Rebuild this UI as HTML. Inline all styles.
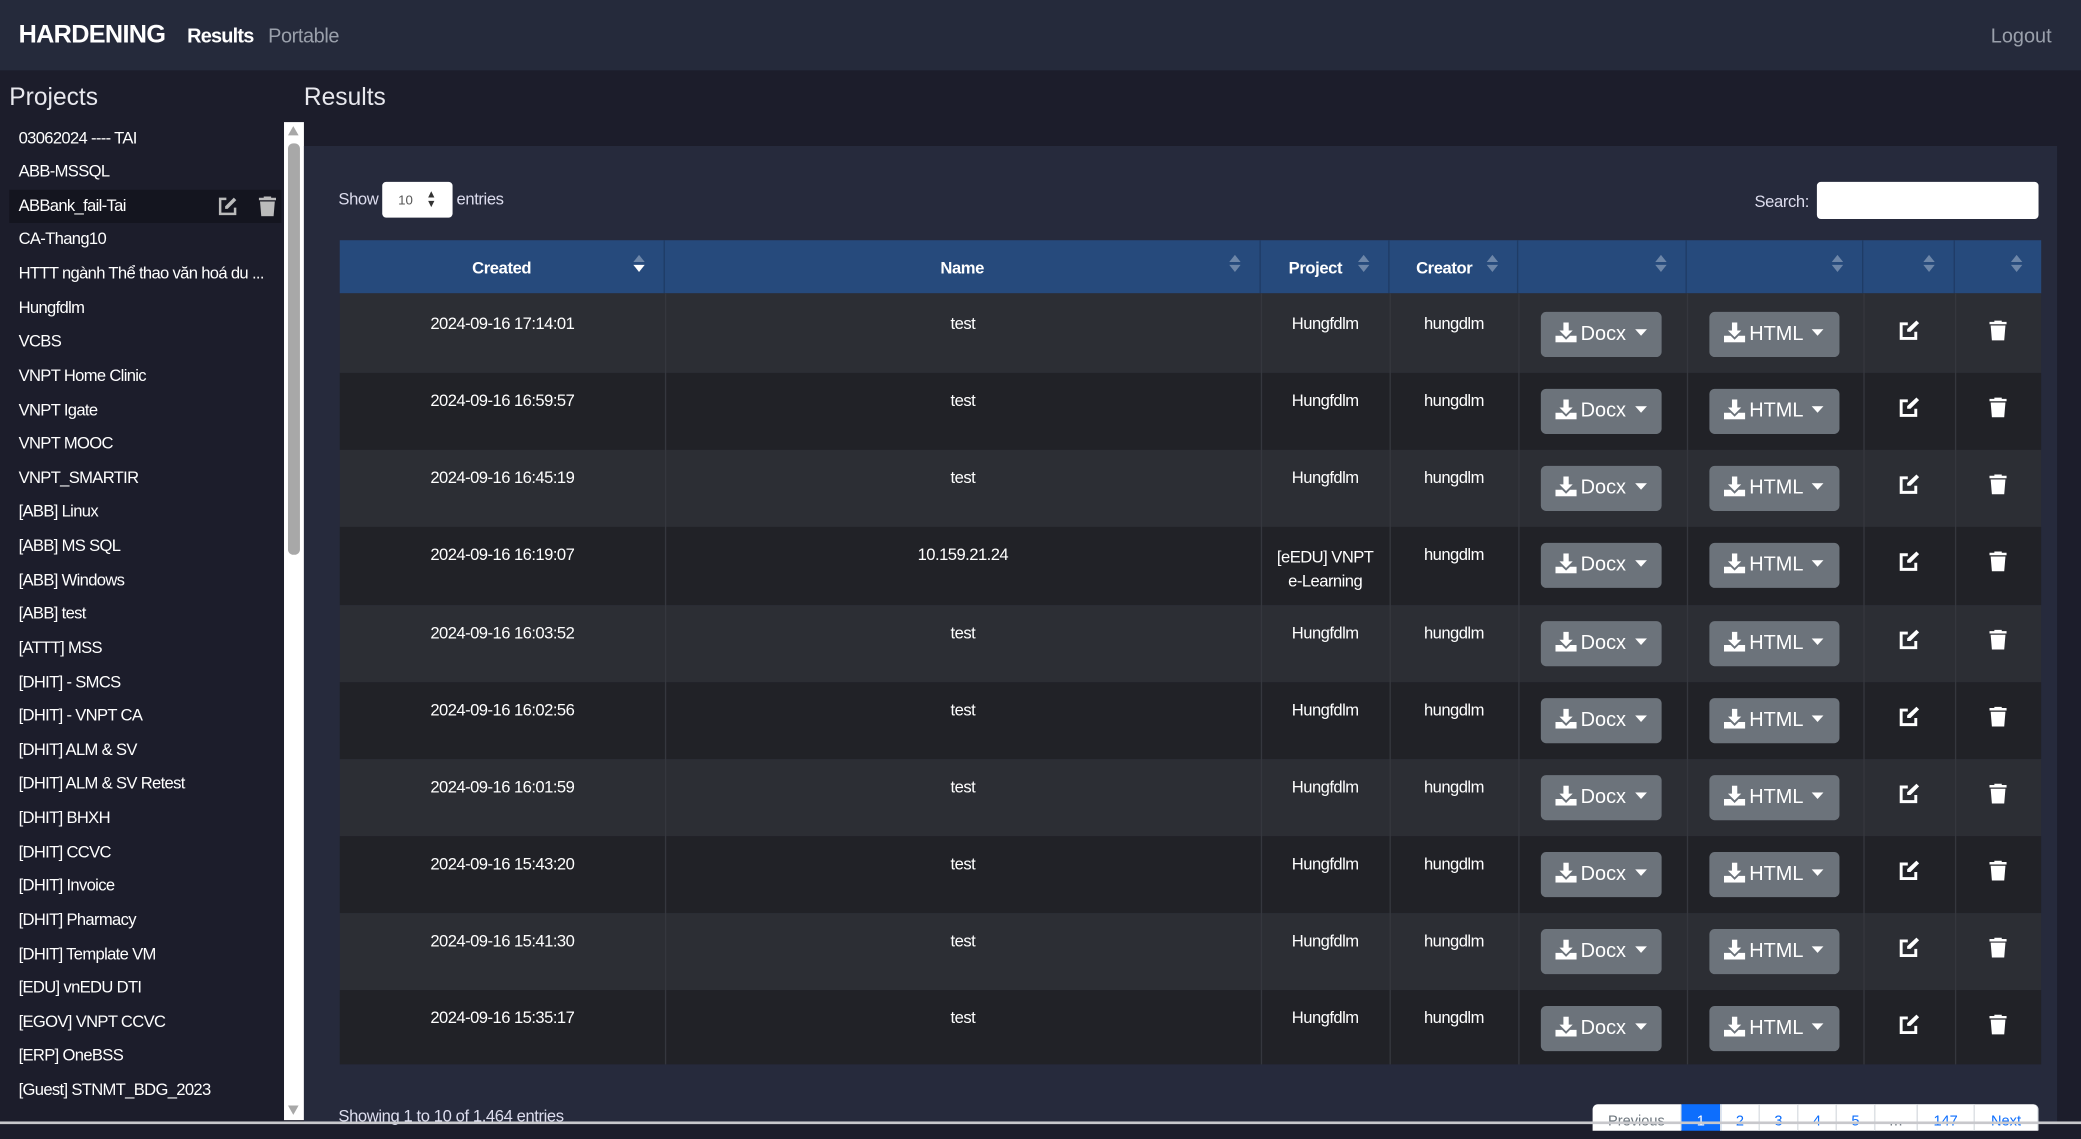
<!DOCTYPE html>
<html><head><meta charset="utf-8">
<style>
*{box-sizing:border-box;margin:0;padding:0}
html,body{width:2081px;height:1124px;overflow:hidden;background:#1c1d2b}
#w{position:absolute;left:0;top:0;width:1568px;height:847px;transform:scale(1.32717);transform-origin:0 0;font-family:"Liberation Sans","Noto Sans CJK SC",sans-serif;color:#fff;background:#1c1d2b}
.a{position:absolute}
#nav{left:0;top:0;width:1568px;height:53px;background:#252a3b}
.side div{position:absolute;left:14px;font-size:12.5px;color:#fff;white-space:nowrap;letter-spacing:-0.5px}
#card{left:229px;top:110px;width:1321px;height:737px;background:#262a3c}
.hd{position:absolute;top:181px;height:40px;background:#264a7c;border-right:1px solid #1f3c66;font-size:12.5px;font-weight:bold;text-align:center;line-height:42px;letter-spacing:-0.3px}
.so{position:absolute;right:14px;top:10px;width:9px;height:15px}
.r{position:absolute;left:256px;width:1282px}
.r.o{background:#2c2e34}.r.e{background:#212227}
.r div{position:absolute;font-size:12.5px;text-align:center;letter-spacing:-0.4px}
.vl{position:absolute;top:181px;height:621px;width:1px;background:#35373e}
.r div.btn{height:34px;background:#6c737b;border-radius:4px;font-size:15px;line-height:34px;text-align:left;padding-left:11px;color:#fff;letter-spacing:0}
.btn svg:first-child{vertical-align:-2px;margin-right:3px}
.pg{position:absolute;top:832px;height:20px;background:#fff;border-right:1px solid #dee2e6;font-size:11px;color:#0d6efd;text-align:center;line-height:26px}
</style></head><body><div id="w">
<div id="nav" class="a">
<div class="a" style="left:14px;top:16px;font-size:19px;font-weight:bold;letter-spacing:-0.5px">HARDENING</div>
<div class="a" style="left:141px;top:19px;font-size:15px;font-weight:bold;letter-spacing:-0.6px">Results</div>
<div class="a" style="left:202px;top:19px;font-size:15px;color:#9aa0ab;letter-spacing:-0.3px">Portable</div>
<div class="a" style="left:1500px;top:19px;font-size:15px;color:#9aa0ab">Logout</div>
</div>
<div class="a" style="left:7px;top:62px;font-size:18.5px;color:#e8e8ee">Projects</div>
<div class="a" style="left:229px;top:62px;font-size:18.5px;color:#e8e8ee">Results</div>
<div class="a" style="left:7px;top:143px;width:205px;height:25px;background:#14151f"></div>
<svg class="a" style="left:164px;top:148px" width="15" height="15" viewBox="0 0 16 16"><path d="M7 2H2v12h12V9" fill="none" stroke="#bbb" stroke-width="2"/><path d="M13 1l2 2-7 7H6V8z" fill="#bbb"/></svg>
<svg class="a" style="left:195px;top:148px" width="13" height="15" viewBox="0 0 14 16"><path d="M4 0h6v1h4v2H0V1h4zM1 4h12l-1 12H2z" fill="#bbb"/></svg>
<div class="side">
<div style="top:97px">03062024 ---- TAI</div>
<div style="top:122px">ABB-MSSQL</div>
<div style="top:148px">ABBank_fail-Tai</div>
<div style="top:173px">CA-Thang10</div>
<div style="top:199px">HTTT ngành Thể thao văn hoá du ...</div>
<div style="top:225px">Hungfdlm</div>
<div style="top:250px">VCBS</div>
<div style="top:276px">VNPT Home Clinic</div>
<div style="top:302px">VNPT Igate</div>
<div style="top:327px">VNPT MOOC</div>
<div style="top:353px">VNPT_SMARTIR</div>
<div style="top:378px">[ABB] Linux</div>
<div style="top:404px">[ABB] MS SQL</div>
<div style="top:430px">[ABB] Windows</div>
<div style="top:455px">[ABB] test</div>
<div style="top:481px">[ATTT] MSS</div>
<div style="top:507px">[DHIT] - SMCS</div>
<div style="top:532px">[DHIT] - VNPT CA</div>
<div style="top:558px">[DHIT] ALM &amp; SV</div>
<div style="top:583px">[DHIT] ALM &amp; SV Retest</div>
<div style="top:609px">[DHIT] BHXH</div>
<div style="top:635px">[DHIT] CCVC</div>
<div style="top:660px">[DHIT] Invoice</div>
<div style="top:686px">[DHIT] Pharmacy</div>
<div style="top:712px">[DHIT] Template VM</div>
<div style="top:737px">[EDU] vnEDU DTI</div>
<div style="top:763px">[EGOV] VNPT CCVC</div>
<div style="top:788px">[ERP] OneBSS</div>
<div style="top:814px">[Guest] STNMT_BDG_2023</div>
</div>
<div class="a" style="left:214px;top:92px;width:15px;height:752px;background:#fff"></div>
<div class="a" style="left:217px;top:108px;width:9px;height:310px;background:#a8a8a8;border-radius:4px"></div>
<div class="a" style="left:217px;top:95px;width:0;height:0;border-left:4.5px solid transparent;border-right:4.5px solid transparent;border-bottom:7px solid #a8a8a8"></div>
<div class="a" style="left:217px;top:833px;width:0;height:0;border-left:4.5px solid transparent;border-right:4.5px solid transparent;border-top:7px solid #a8a8a8"></div>
<div id="card" class="a"></div>
<div class="a" style="left:255px;top:143px;font-size:12.5px;color:#dde;letter-spacing:-0.3px">Show</div>
<div class="a" style="left:288px;top:137px;width:53px;height:27px;background:#fff;border-radius:3px;font-size:10px;color:#555;padding:9px 0 0 12px">10<span style="position:absolute;left:33px;top:6px;font-size:8px;line-height:7px;color:#333">▲<br>▼</span></div>
<div class="a" style="left:344px;top:143px;font-size:12.5px;color:#dde;letter-spacing:-0.3px">entries</div>
<div class="a" style="left:1322px;top:145px;font-size:12.5px;color:#dde;letter-spacing:-0.3px">Search:</div>
<div class="a" style="left:1369px;top:137px;width:167px;height:28px;background:#fff;border-radius:3px"></div>

<div class="hd" style="left:256px;width:245px">Created<svg class="so" viewBox="0 0 8 14"><path d="M4 1l4 5H0z" fill="#6d86a8"/><path d="M4 13l4-5H0z" fill="#fff"/></svg></div>
<div class="hd" style="left:501px;width:449px">Name<svg class="so" viewBox="0 0 8 14"><path d="M4 1l4 5H0zM4 13l4-5H0z" fill="#6d86a8"/></svg></div>
<div class="hd" style="left:950px;width:97px;text-align:left;padding-left:21px">Project<svg class="so" viewBox="0 0 8 14"><path d="M4 1l4 5H0zM4 13l4-5H0z" fill="#6d86a8"/></svg></div>
<div class="hd" style="left:1047px;width:97px;text-align:left;padding-left:20px">Creator<svg class="so" viewBox="0 0 8 14"><path d="M4 1l4 5H0zM4 13l4-5H0z" fill="#6d86a8"/></svg></div>
<div class="hd" style="left:1144px;width:127px"><svg class="so" viewBox="0 0 8 14"><path d="M4 1l4 5H0zM4 13l4-5H0z" fill="#6d86a8"/></svg></div>
<div class="hd" style="left:1271px;width:133px"><svg class="so" viewBox="0 0 8 14"><path d="M4 1l4 5H0zM4 13l4-5H0z" fill="#6d86a8"/></svg></div>
<div class="hd" style="left:1404px;width:69px"><svg class="so" viewBox="0 0 8 14"><path d="M4 1l4 5H0zM4 13l4-5H0z" fill="#6d86a8"/></svg></div>
<div class="hd" style="left:1473px;width:65px;border-right:0"><svg class="so" viewBox="0 0 8 14"><path d="M4 1l4 5H0zM4 13l4-5H0z" fill="#6d86a8"/></svg></div>

<div class="r o" style="top:221px;height:60px"><div style="left:0;width:245px;top:16px">2024-09-16 17:14:01</div><div style="left:245px;width:449px;top:16px">test</div><div style="left:694px;width:97px;top:16px">Hungfdlm</div><div style="left:791px;width:97px;top:16px">hungdlm</div>
<div class="btn" style="left:905px;top:14px;width:91px"><svg width="16" height="15" viewBox="0 0 16 15"><path d="M6 0h4v6h3l-5 5-5-5h3zM0 10h5l3 3 3-3h5v5H0z" fill="#fff"/></svg>Docx <svg width="9" height="6" viewBox="0 0 9 6" style="vertical-align:2px;margin-left:3px"><path d="M0 0h9L4.5 5z" fill="#fff"/></svg></div>
<div class="btn" style="left:1032px;top:14px;width:98px"><svg width="16" height="15" viewBox="0 0 16 15"><path d="M6 0h4v6h3l-5 5-5-5h3zM0 10h5l3 3 3-3h5v5H0z" fill="#fff"/></svg>HTML <svg width="9" height="6" viewBox="0 0 9 6" style="vertical-align:2px;margin-left:3px"><path d="M0 0h9L4.5 5z" fill="#fff"/></svg></div>
<svg class="a" style="left:1174px;top:20px" width="17" height="16" viewBox="0 0 16 16"><path d="M7 3H2v11h11V9" fill="none" stroke="#fff" stroke-width="2.2"/><path d="M13.5 0.5l2 2L9 9H6.5V7z" fill="#fff"/></svg>
<svg class="a" style="left:1243px;top:20px" width="13" height="16" viewBox="0 0 14 16"><path d="M4 0h6v1h4v2H0V1h4zM1 4h12l-1 12H2z" fill="#fff"/></svg></div>

<div class="r e" style="top:281px;height:58px"><div style="left:0;width:245px;top:14px">2024-09-16 16:59:57</div><div style="left:245px;width:449px;top:14px">test</div><div style="left:694px;width:97px;top:14px">Hungfdlm</div><div style="left:791px;width:97px;top:14px">hungdlm</div>
<div class="btn" style="left:905px;top:12px;width:91px"><svg width="16" height="15" viewBox="0 0 16 15"><path d="M6 0h4v6h3l-5 5-5-5h3zM0 10h5l3 3 3-3h5v5H0z" fill="#fff"/></svg>Docx <svg width="9" height="6" viewBox="0 0 9 6" style="vertical-align:2px;margin-left:3px"><path d="M0 0h9L4.5 5z" fill="#fff"/></svg></div>
<div class="btn" style="left:1032px;top:12px;width:98px"><svg width="16" height="15" viewBox="0 0 16 15"><path d="M6 0h4v6h3l-5 5-5-5h3zM0 10h5l3 3 3-3h5v5H0z" fill="#fff"/></svg>HTML <svg width="9" height="6" viewBox="0 0 9 6" style="vertical-align:2px;margin-left:3px"><path d="M0 0h9L4.5 5z" fill="#fff"/></svg></div>
<svg class="a" style="left:1174px;top:18px" width="17" height="16" viewBox="0 0 16 16"><path d="M7 3H2v11h11V9" fill="none" stroke="#fff" stroke-width="2.2"/><path d="M13.5 0.5l2 2L9 9H6.5V7z" fill="#fff"/></svg>
<svg class="a" style="left:1243px;top:18px" width="13" height="16" viewBox="0 0 14 16"><path d="M4 0h6v1h4v2H0V1h4zM1 4h12l-1 12H2z" fill="#fff"/></svg></div>

<div class="r o" style="top:339px;height:58px"><div style="left:0;width:245px;top:14px">2024-09-16 16:45:19</div><div style="left:245px;width:449px;top:14px">test</div><div style="left:694px;width:97px;top:14px">Hungfdlm</div><div style="left:791px;width:97px;top:14px">hungdlm</div>
<div class="btn" style="left:905px;top:12px;width:91px"><svg width="16" height="15" viewBox="0 0 16 15"><path d="M6 0h4v6h3l-5 5-5-5h3zM0 10h5l3 3 3-3h5v5H0z" fill="#fff"/></svg>Docx <svg width="9" height="6" viewBox="0 0 9 6" style="vertical-align:2px;margin-left:3px"><path d="M0 0h9L4.5 5z" fill="#fff"/></svg></div>
<div class="btn" style="left:1032px;top:12px;width:98px"><svg width="16" height="15" viewBox="0 0 16 15"><path d="M6 0h4v6h3l-5 5-5-5h3zM0 10h5l3 3 3-3h5v5H0z" fill="#fff"/></svg>HTML <svg width="9" height="6" viewBox="0 0 9 6" style="vertical-align:2px;margin-left:3px"><path d="M0 0h9L4.5 5z" fill="#fff"/></svg></div>
<svg class="a" style="left:1174px;top:18px" width="17" height="16" viewBox="0 0 16 16"><path d="M7 3H2v11h11V9" fill="none" stroke="#fff" stroke-width="2.2"/><path d="M13.5 0.5l2 2L9 9H6.5V7z" fill="#fff"/></svg>
<svg class="a" style="left:1243px;top:18px" width="13" height="16" viewBox="0 0 14 16"><path d="M4 0h6v1h4v2H0V1h4zM1 4h12l-1 12H2z" fill="#fff"/></svg></div>

<div class="r e" style="top:397px;height:59px"><div style="left:0;width:245px;top:14px">2024-09-16 16:19:07</div><div style="left:245px;width:449px;top:14px">10.159.21.24</div><div style="left:694px;width:97px;top:14px;line-height:18px">[eEDU] VNPT<br>e-Learning</div><div style="left:791px;width:97px;top:14px">hungdlm</div>
<div class="btn" style="left:905px;top:12px;width:91px"><svg width="16" height="15" viewBox="0 0 16 15"><path d="M6 0h4v6h3l-5 5-5-5h3zM0 10h5l3 3 3-3h5v5H0z" fill="#fff"/></svg>Docx <svg width="9" height="6" viewBox="0 0 9 6" style="vertical-align:2px;margin-left:3px"><path d="M0 0h9L4.5 5z" fill="#fff"/></svg></div>
<div class="btn" style="left:1032px;top:12px;width:98px"><svg width="16" height="15" viewBox="0 0 16 15"><path d="M6 0h4v6h3l-5 5-5-5h3zM0 10h5l3 3 3-3h5v5H0z" fill="#fff"/></svg>HTML <svg width="9" height="6" viewBox="0 0 9 6" style="vertical-align:2px;margin-left:3px"><path d="M0 0h9L4.5 5z" fill="#fff"/></svg></div>
<svg class="a" style="left:1174px;top:18px" width="17" height="16" viewBox="0 0 16 16"><path d="M7 3H2v11h11V9" fill="none" stroke="#fff" stroke-width="2.2"/><path d="M13.5 0.5l2 2L9 9H6.5V7z" fill="#fff"/></svg>
<svg class="a" style="left:1243px;top:18px" width="13" height="16" viewBox="0 0 14 16"><path d="M4 0h6v1h4v2H0V1h4zM1 4h12l-1 12H2z" fill="#fff"/></svg></div>

<div class="r o" style="top:456px;height:58px"><div style="left:0;width:245px;top:14px">2024-09-16 16:03:52</div><div style="left:245px;width:449px;top:14px">test</div><div style="left:694px;width:97px;top:14px">Hungfdlm</div><div style="left:791px;width:97px;top:14px">hungdlm</div>
<div class="btn" style="left:905px;top:12px;width:91px"><svg width="16" height="15" viewBox="0 0 16 15"><path d="M6 0h4v6h3l-5 5-5-5h3zM0 10h5l3 3 3-3h5v5H0z" fill="#fff"/></svg>Docx <svg width="9" height="6" viewBox="0 0 9 6" style="vertical-align:2px;margin-left:3px"><path d="M0 0h9L4.5 5z" fill="#fff"/></svg></div>
<div class="btn" style="left:1032px;top:12px;width:98px"><svg width="16" height="15" viewBox="0 0 16 15"><path d="M6 0h4v6h3l-5 5-5-5h3zM0 10h5l3 3 3-3h5v5H0z" fill="#fff"/></svg>HTML <svg width="9" height="6" viewBox="0 0 9 6" style="vertical-align:2px;margin-left:3px"><path d="M0 0h9L4.5 5z" fill="#fff"/></svg></div>
<svg class="a" style="left:1174px;top:18px" width="17" height="16" viewBox="0 0 16 16"><path d="M7 3H2v11h11V9" fill="none" stroke="#fff" stroke-width="2.2"/><path d="M13.5 0.5l2 2L9 9H6.5V7z" fill="#fff"/></svg>
<svg class="a" style="left:1243px;top:18px" width="13" height="16" viewBox="0 0 14 16"><path d="M4 0h6v1h4v2H0V1h4zM1 4h12l-1 12H2z" fill="#fff"/></svg></div>

<div class="r e" style="top:514px;height:58px"><div style="left:0;width:245px;top:14px">2024-09-16 16:02:56</div><div style="left:245px;width:449px;top:14px">test</div><div style="left:694px;width:97px;top:14px">Hungfdlm</div><div style="left:791px;width:97px;top:14px">hungdlm</div>
<div class="btn" style="left:905px;top:12px;width:91px"><svg width="16" height="15" viewBox="0 0 16 15"><path d="M6 0h4v6h3l-5 5-5-5h3zM0 10h5l3 3 3-3h5v5H0z" fill="#fff"/></svg>Docx <svg width="9" height="6" viewBox="0 0 9 6" style="vertical-align:2px;margin-left:3px"><path d="M0 0h9L4.5 5z" fill="#fff"/></svg></div>
<div class="btn" style="left:1032px;top:12px;width:98px"><svg width="16" height="15" viewBox="0 0 16 15"><path d="M6 0h4v6h3l-5 5-5-5h3zM0 10h5l3 3 3-3h5v5H0z" fill="#fff"/></svg>HTML <svg width="9" height="6" viewBox="0 0 9 6" style="vertical-align:2px;margin-left:3px"><path d="M0 0h9L4.5 5z" fill="#fff"/></svg></div>
<svg class="a" style="left:1174px;top:18px" width="17" height="16" viewBox="0 0 16 16"><path d="M7 3H2v11h11V9" fill="none" stroke="#fff" stroke-width="2.2"/><path d="M13.5 0.5l2 2L9 9H6.5V7z" fill="#fff"/></svg>
<svg class="a" style="left:1243px;top:18px" width="13" height="16" viewBox="0 0 14 16"><path d="M4 0h6v1h4v2H0V1h4zM1 4h12l-1 12H2z" fill="#fff"/></svg></div>

<div class="r o" style="top:572px;height:58px"><div style="left:0;width:245px;top:14px">2024-09-16 16:01:59</div><div style="left:245px;width:449px;top:14px">test</div><div style="left:694px;width:97px;top:14px">Hungfdlm</div><div style="left:791px;width:97px;top:14px">hungdlm</div>
<div class="btn" style="left:905px;top:12px;width:91px"><svg width="16" height="15" viewBox="0 0 16 15"><path d="M6 0h4v6h3l-5 5-5-5h3zM0 10h5l3 3 3-3h5v5H0z" fill="#fff"/></svg>Docx <svg width="9" height="6" viewBox="0 0 9 6" style="vertical-align:2px;margin-left:3px"><path d="M0 0h9L4.5 5z" fill="#fff"/></svg></div>
<div class="btn" style="left:1032px;top:12px;width:98px"><svg width="16" height="15" viewBox="0 0 16 15"><path d="M6 0h4v6h3l-5 5-5-5h3zM0 10h5l3 3 3-3h5v5H0z" fill="#fff"/></svg>HTML <svg width="9" height="6" viewBox="0 0 9 6" style="vertical-align:2px;margin-left:3px"><path d="M0 0h9L4.5 5z" fill="#fff"/></svg></div>
<svg class="a" style="left:1174px;top:18px" width="17" height="16" viewBox="0 0 16 16"><path d="M7 3H2v11h11V9" fill="none" stroke="#fff" stroke-width="2.2"/><path d="M13.5 0.5l2 2L9 9H6.5V7z" fill="#fff"/></svg>
<svg class="a" style="left:1243px;top:18px" width="13" height="16" viewBox="0 0 14 16"><path d="M4 0h6v1h4v2H0V1h4zM1 4h12l-1 12H2z" fill="#fff"/></svg></div>

<div class="r e" style="top:630px;height:58px"><div style="left:0;width:245px;top:14px">2024-09-16 15:43:20</div><div style="left:245px;width:449px;top:14px">test</div><div style="left:694px;width:97px;top:14px">Hungfdlm</div><div style="left:791px;width:97px;top:14px">hungdlm</div>
<div class="btn" style="left:905px;top:12px;width:91px"><svg width="16" height="15" viewBox="0 0 16 15"><path d="M6 0h4v6h3l-5 5-5-5h3zM0 10h5l3 3 3-3h5v5H0z" fill="#fff"/></svg>Docx <svg width="9" height="6" viewBox="0 0 9 6" style="vertical-align:2px;margin-left:3px"><path d="M0 0h9L4.5 5z" fill="#fff"/></svg></div>
<div class="btn" style="left:1032px;top:12px;width:98px"><svg width="16" height="15" viewBox="0 0 16 15"><path d="M6 0h4v6h3l-5 5-5-5h3zM0 10h5l3 3 3-3h5v5H0z" fill="#fff"/></svg>HTML <svg width="9" height="6" viewBox="0 0 9 6" style="vertical-align:2px;margin-left:3px"><path d="M0 0h9L4.5 5z" fill="#fff"/></svg></div>
<svg class="a" style="left:1174px;top:18px" width="17" height="16" viewBox="0 0 16 16"><path d="M7 3H2v11h11V9" fill="none" stroke="#fff" stroke-width="2.2"/><path d="M13.5 0.5l2 2L9 9H6.5V7z" fill="#fff"/></svg>
<svg class="a" style="left:1243px;top:18px" width="13" height="16" viewBox="0 0 14 16"><path d="M4 0h6v1h4v2H0V1h4zM1 4h12l-1 12H2z" fill="#fff"/></svg></div>

<div class="r o" style="top:688px;height:58px"><div style="left:0;width:245px;top:14px">2024-09-16 15:41:30</div><div style="left:245px;width:449px;top:14px">test</div><div style="left:694px;width:97px;top:14px">Hungfdlm</div><div style="left:791px;width:97px;top:14px">hungdlm</div>
<div class="btn" style="left:905px;top:12px;width:91px"><svg width="16" height="15" viewBox="0 0 16 15"><path d="M6 0h4v6h3l-5 5-5-5h3zM0 10h5l3 3 3-3h5v5H0z" fill="#fff"/></svg>Docx <svg width="9" height="6" viewBox="0 0 9 6" style="vertical-align:2px;margin-left:3px"><path d="M0 0h9L4.5 5z" fill="#fff"/></svg></div>
<div class="btn" style="left:1032px;top:12px;width:98px"><svg width="16" height="15" viewBox="0 0 16 15"><path d="M6 0h4v6h3l-5 5-5-5h3zM0 10h5l3 3 3-3h5v5H0z" fill="#fff"/></svg>HTML <svg width="9" height="6" viewBox="0 0 9 6" style="vertical-align:2px;margin-left:3px"><path d="M0 0h9L4.5 5z" fill="#fff"/></svg></div>
<svg class="a" style="left:1174px;top:18px" width="17" height="16" viewBox="0 0 16 16"><path d="M7 3H2v11h11V9" fill="none" stroke="#fff" stroke-width="2.2"/><path d="M13.5 0.5l2 2L9 9H6.5V7z" fill="#fff"/></svg>
<svg class="a" style="left:1243px;top:18px" width="13" height="16" viewBox="0 0 14 16"><path d="M4 0h6v1h4v2H0V1h4zM1 4h12l-1 12H2z" fill="#fff"/></svg></div>

<div class="r e" style="top:746px;height:56px"><div style="left:0;width:245px;top:14px">2024-09-16 15:35:17</div><div style="left:245px;width:449px;top:14px">test</div><div style="left:694px;width:97px;top:14px">Hungfdlm</div><div style="left:791px;width:97px;top:14px">hungdlm</div>
<div class="btn" style="left:905px;top:12px;width:91px"><svg width="16" height="15" viewBox="0 0 16 15"><path d="M6 0h4v6h3l-5 5-5-5h3zM0 10h5l3 3 3-3h5v5H0z" fill="#fff"/></svg>Docx <svg width="9" height="6" viewBox="0 0 9 6" style="vertical-align:2px;margin-left:3px"><path d="M0 0h9L4.5 5z" fill="#fff"/></svg></div>
<div class="btn" style="left:1032px;top:12px;width:98px"><svg width="16" height="15" viewBox="0 0 16 15"><path d="M6 0h4v6h3l-5 5-5-5h3zM0 10h5l3 3 3-3h5v5H0z" fill="#fff"/></svg>HTML <svg width="9" height="6" viewBox="0 0 9 6" style="vertical-align:2px;margin-left:3px"><path d="M0 0h9L4.5 5z" fill="#fff"/></svg></div>
<svg class="a" style="left:1174px;top:18px" width="17" height="16" viewBox="0 0 16 16"><path d="M7 3H2v11h11V9" fill="none" stroke="#fff" stroke-width="2.2"/><path d="M13.5 0.5l2 2L9 9H6.5V7z" fill="#fff"/></svg>
<svg class="a" style="left:1243px;top:18px" width="13" height="16" viewBox="0 0 14 16"><path d="M4 0h6v1h4v2H0V1h4zM1 4h12l-1 12H2z" fill="#fff"/></svg></div>

<div class="vl" style="left:501px;top:221px;height:581px"></div>
<div class="vl" style="left:950px;top:221px;height:581px"></div>
<div class="vl" style="left:1047px;top:221px;height:581px"></div>
<div class="vl" style="left:1144px;top:221px;height:581px"></div>
<div class="vl" style="left:1271px;top:221px;height:581px"></div>
<div class="vl" style="left:1404px;top:221px;height:581px"></div>
<div class="vl" style="left:1473px;top:221px;height:581px"></div>

<div class="a" style="left:255px;top:834px;font-size:12.5px;color:#dde;letter-spacing:-0.3px">Showing 1 to 10 of 1,464 entries</div>
<div class="pg" style="left:1200px;width:67px;border-radius:4px 0 0 0;color:#6c757d">Previous</div>
<div class="pg" style="left:1267px;width:30px;background:#0d6efd;color:#fff">1</div>
<div class="pg" style="left:1297px;width:29px">2</div>
<div class="pg" style="left:1326px;width:29px">3</div>
<div class="pg" style="left:1355px;width:29px">4</div>
<div class="pg" style="left:1384px;width:29px">5</div>
<div class="pg" style="left:1413px;width:32px;color:#6c757d">…</div>
<div class="pg" style="left:1445px;width:43px">147</div>
<div class="pg" style="left:1488px;width:48px;border-radius:0 4px 0 0">Next</div>
<div class="a" style="left:0;top:845px;width:1568px;height:2px;background:#c8c8cc"></div>
</div></body></html>
